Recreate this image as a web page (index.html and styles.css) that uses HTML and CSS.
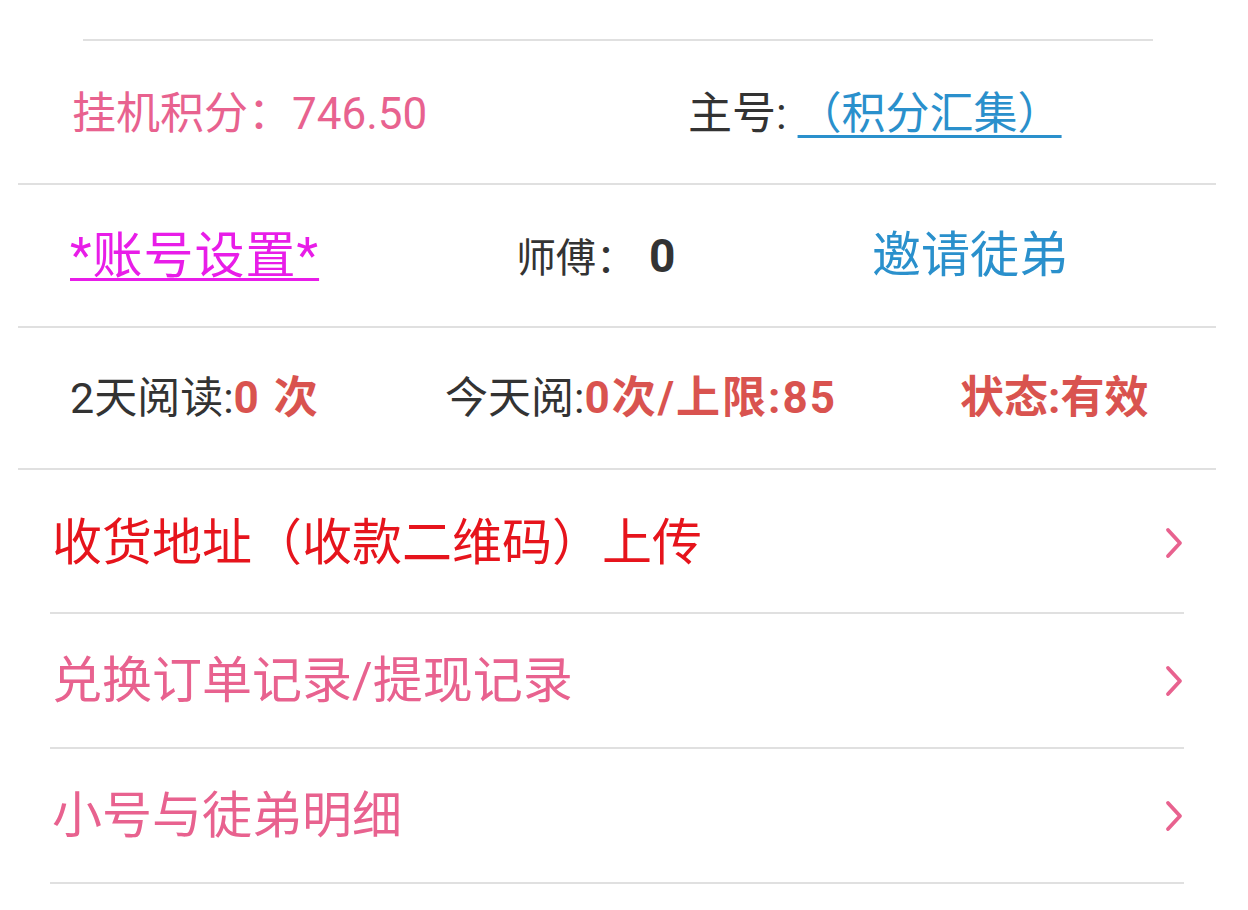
FILE: index.html
```html
<!DOCTYPE html>
<html lang="zh-CN">
<head>
<meta charset="utf-8">
<title>我的</title>
<link rel="stylesheet" href="styles.css">
</head>
<body>
<div class="page">
  <div class="topline"></div>
  <div class="stats">
    <div class="row row1">
      <div class="cell c1a"><span class="pink">挂机积分：746.50</span></div>
      <div class="cell"><span class="gray">主号: </span><a class="blue-link">（积分汇集）</a></div>
    </div>
    <div class="row row2">
      <div class="cell c2a"><a class="magenta-link">*账号设置*</a></div>
      <div class="cell c2b"><span class="gray small">师傅：</span><b class="gray-b">0</b></div>
      <div class="cell"><span class="blue big">邀请徒弟</span></div>
    </div>
    <div class="row row3">
      <div class="cell c3a"><span class="gray">2天阅读:</span><b class="red">0 次</b></div>
      <div class="cell c3b"><span class="gray">今天阅:</span><b class="red">0次/上限:85</b></div>
      <div class="cell"><b class="red tight">状态:有效</b></div>
    </div>
  </div>
  <ul class="menu">
    <li class="item"><span class="item-text red-strong">收货地址（收款二维码）上传</span>
      <svg class="chev" width="18" height="32" viewBox="0 0 18 32"><polyline points="3,3 15,16 3,29" fill="none" stroke="#e8628f" stroke-width="3.8" stroke-linecap="round" stroke-linejoin="round"/></svg></li>
    <li class="item"><span class="item-text pink">兑换订单记录/提现记录</span>
      <svg class="chev" width="18" height="32" viewBox="0 0 18 32"><polyline points="3,3 15,16 3,29" fill="none" stroke="#e8628f" stroke-width="3.8" stroke-linecap="round" stroke-linejoin="round"/></svg></li>
    <li class="item"><span class="item-text pink">小号与徒弟明细</span>
      <svg class="chev" width="18" height="32" viewBox="0 0 18 32"><polyline points="3,3 15,16 3,29" fill="none" stroke="#e8628f" stroke-width="3.8" stroke-linecap="round" stroke-linejoin="round"/></svg></li>
  </ul>
</div>
</body>
</html>
```

FILE: styles.css
```css
html, body {
  margin: 0;
  padding: 0;
  background: #ffffff;
}
body {
  font-family: Roboto, "Noto Sans CJK SC", sans-serif;
  width: 1248px;
  height: 910px;
  overflow: hidden;
}
.page {
  padding-top: 39px;
}
.topline {
  margin-left: 83px;
  width: 1070px;
  height: 2px;
  background: #e0e0e0;
}
.stats {
  margin-left: 18px;
  width: 1198px;
}
.row {
  display: flex;
  align-items: center;
  border-bottom: 2px solid #e0e0e0;
  box-sizing: border-box;
}
.row1 { height: 144px; padding: 4px 0 0 54px; font-size: 44px; }
.row2 { height: 143px; padding-left: 52px; }
.row3 { height: 142px; padding-left: 52px; font-size: 43px; }
.cell { white-space: nowrap; line-height: 1; }
.c1a { width: 616px; }
.c2a { width: 446px; }
.c2b { width: 356px; }
.c3a { width: 375px; }
.c3b { width: 515px; }

.pink { color: #e8628f; }
.gray { color: #333333; }
.gray-b { color: #333333; font-weight: 700; font-size: 46px; margin-left: 13px; }
.small { font-size: 40px; }
.red { color: #d9534f; font-weight: 700; font-size: 44px; letter-spacing: 2px; }
.tight { letter-spacing: 0; }
.blue { color: #2a90cc; }
.big { font-size: 49px; }
.blue-link {
  color: #2a90cc;
  text-decoration: underline;
  text-decoration-thickness: 3px;
  text-underline-offset: 6px;
}
.magenta-link {
  color: #e81de8;
  font-size: 50px;
  letter-spacing: 1px;
  text-decoration: underline;
  text-decoration-thickness: 3px;
  text-underline-offset: 5px;
}

.menu {
  list-style: none;
  margin: 0 0 0 50px;
  padding: 0;
  width: 1134px;
}
.item {
  display: flex;
  align-items: center;
  justify-content: space-between;
  height: 135px;
  border-bottom: 2px solid #e0e0e0;
  box-sizing: border-box;
  padding-left: 2px;
  padding-right: 1px;
}
.item:first-child { height: 144px; padding-top: 4px; }
.item-text {
  font-size: 50px;
  line-height: 1;
  white-space: nowrap;
}
.red-strong { color: #e6141c; }
.chev { display: block; }
```
